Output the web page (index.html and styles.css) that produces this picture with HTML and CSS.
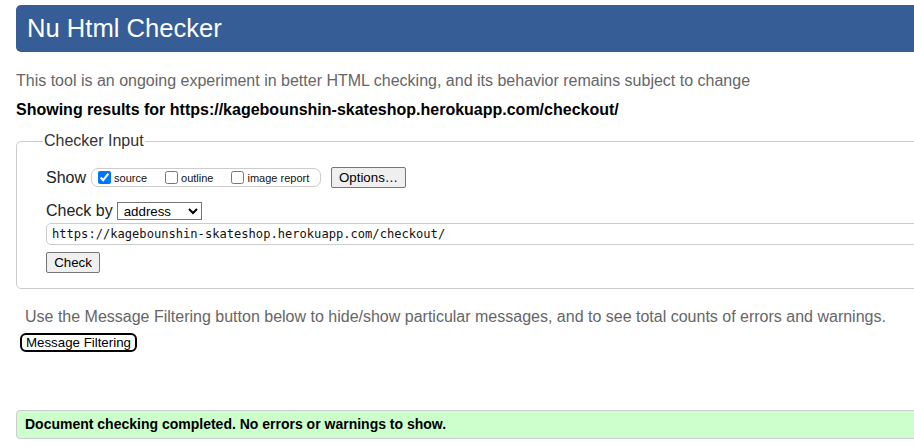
FILE: index.html
```html
<!DOCTYPE html>
<html lang="en">
<head>
<meta charset="utf-8">
<title>Nu Html Checker</title>
<link rel="stylesheet" href="styles.css">
</head>
<body>
<div class="page">
  <h1 class="banner">Nu Html Checker</h1>
  <p class="intro">This tool is an ongoing experiment in better HTML checking, and its behavior remains subject to change</p>
  <p class="showing">Showing results for https://kagebounshin-skateshop.herokuapp.com/checkout/</p>
  <fieldset class="checker">
    <legend>Checker Input</legend>
    <div class="row show-row">
      <span class="lbl">Show</span>
      <span class="group">
        <label class="opt"><input type="checkbox" checked> source</label>
        <label class="opt"><input type="checkbox"> outline</label>
        <label class="opt"><input type="checkbox"> image report</label>
      </span>
      <button class="btn options" type="button">Options…</button>
    </div>
    <div class="row by-row">
      <span class="lbl">Check by</span>
      <select class="sel"><option>address</option></select>
    </div>
    <div class="url">https://kagebounshin-skateshop.herokuapp.com/checkout/</div>
    <button class="btn check" type="button">Check</button>
  </fieldset>
  <p class="filter-note">Use the Message Filtering button below to hide/show particular messages, and to see total counts of errors and warnings.</p>
  <button class="filter-btn" type="button">Message Filtering</button>
  <div class="success">Document checking completed. No errors or warnings to show.</div>
</div>
</body>
</html>
```
FILE: styles.css
```css
html, body {
  margin: 0;
  padding: 0;
  overflow: hidden;
  background: #fff;
}
body {
  font-family: "Liberation Sans", Arial, sans-serif;
  color: #000;
}
.page {
  width: 1000px;
  padding: 5px 0 0 16px;
}
.banner {
  margin: 0;
  height: 47px;
  box-sizing: border-box;
  background: #365d95;
  color: #fff;
  font-weight: normal;
  font-size: 25.6px;
  line-height: 47px;
  padding-left: 11px;
  border-radius: 5px;
}
.intro {
  margin: 19px 0 0;
  font-size: 16px;
  line-height: 20px;
  color: #666;
}
.showing {
  margin: 9px 0 0;
  font-size: 16px;
  line-height: 20px;
  font-weight: bold;
}
.checker {
  margin: 12px 0 0;
  padding: 17px 0 15px 29px;
  border: 1px solid #ccc;
  border-radius: 5px;
  min-width: 0;
}
.checker legend {
  font-size: 16px;
  color: #333;
  padding: 0 1px;
  margin-left: -3px;
}
.row {
  display: flex;
  align-items: center;
}
.lbl {
  font-size: 16px;
  color: #222;
}
.show-row {
  height: 21px;
}
.group {
  display: flex;
  align-items: center;
  margin-left: 5px;
  height: 19px;
  box-sizing: border-box;
  width: 230px;
  border: 1px solid #ccc;
  border-radius: 7px;
  padding-left: 6px;
}
.opt {
  display: flex;
  align-items: center;
  font-size: 11px;
  color: #111;
  margin-right: 18px;
}
.opt:last-child { margin-right: 0; }
.opt input {
  margin: 0 3px 0 0;
  width: 13px;
  height: 13px;
}
.btn {
  font-family: "Liberation Sans", Arial, sans-serif;
  font-size: 13.3px;
  color: #000;
  background: #efefef;
  border: 1px solid #767676;
  border-radius: 2px;
  padding: 0 6px;
  height: 21px;
}
.options {
  margin-left: 10px;
  width: 75px;
}
.by-row {
  margin-top: 14px;
}
.sel {
  margin-left: 4px;
  width: 85px;
  height: 18px;
  font-family: "Liberation Sans", Arial, sans-serif;
  font-size: 13.3px;
  border: 1px solid #767676;
  border-radius: 0;
  background: #fff;
  padding: 0 2px;
}
.url {
  margin-top: 3px;
  height: 22px;
  box-sizing: border-box;
  border: 1px solid #ccc;
  border-radius: 5px;
  font-family: "DejaVu Sans Mono", "Liberation Mono", monospace;
  font-size: 12.1px;
  line-height: 20px;
  padding-left: 5px;
  color: #111;
}
.check {
  margin-top: 7px;
  width: 54px;
  padding: 0;
}
.filter-note {
  margin: 18px 0 0 9px;
  font-size: 16px;
  line-height: 20px;
  color: #666;
}
.filter-btn {
  display: block;
  margin: 6px 0 0 4px;
  font-family: "Liberation Sans", Arial, sans-serif;
  font-size: 13.3px;
  color: #000;
  background: #fff;
  border: 2px solid #000;
  border-radius: 6px;
  height: 19px;
  padding: 0 4px;
  line-height: 14px;
}
.success {
  margin-top: 58px;
  height: 29px;
  box-sizing: border-box;
  background: #ccffcc;
  border: 1px solid #ccc;
  border-radius: 4px;
  font-size: 14px;
  font-weight: bold;
  line-height: 27px;
  padding-left: 8px;
}
```
